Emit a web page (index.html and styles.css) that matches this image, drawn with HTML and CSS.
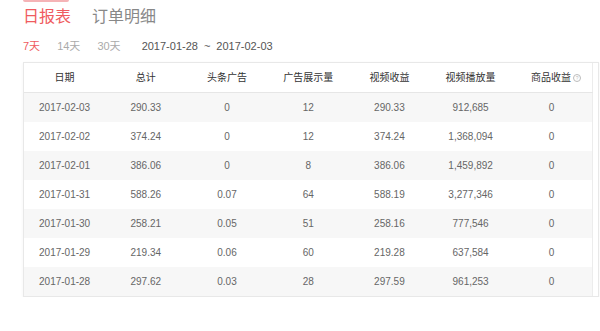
FILE: index.html
```html
<!DOCTYPE html>
<html lang="zh-CN">
<head>
    <meta charset="UTF-8">
    <meta name="viewport" content="width=device-width, initial-scale=1.0">
    <title>日报表</title>
    <link rel="stylesheet" href="styles.css">
</head>
<body>
    <div class="page">
        <div class="nav-mark"></div>

        <div class="tabs">
            <span class="tab active">日报表</span>
            <span class="tab">订单明细</span>
        </div>

        <div class="filters">
            <span class="range active">7天</span>
            <span class="range">14天</span>
            <span class="range">30天</span>
            <span class="date-range">2017-01-28<span class="tilde">~</span>2017-02-03</span>
        </div>

        <div class="table-wrap">
            <table class="report">
                <thead>
                    <tr>
                        <th>日期</th>
                        <th>总计</th>
                        <th>头条广告</th>
                        <th>广告展示量</th>
                        <th>视频收益</th>
                        <th>视频播放量</th>
                        <th>商品收益<span class="help">?</span></th>
                    </tr>
                </thead>
                <tbody>
                    <tr>
                        <td>2017-02-03</td><td>290.33</td><td>0</td><td>12</td><td>290.33</td><td>912,685</td><td>0</td>
                    </tr>
                    <tr>
                        <td>2017-02-02</td><td>374.24</td><td>0</td><td>12</td><td>374.24</td><td>1,368,094</td><td>0</td>
                    </tr>
                    <tr>
                        <td>2017-02-01</td><td>386.06</td><td>0</td><td>8</td><td>386.06</td><td>1,459,892</td><td>0</td>
                    </tr>
                    <tr>
                        <td>2017-01-31</td><td>588.26</td><td>0.07</td><td>64</td><td>588.19</td><td>3,277,346</td><td>0</td>
                    </tr>
                    <tr>
                        <td>2017-01-30</td><td>258.21</td><td>0.05</td><td>51</td><td>258.16</td><td>777,546</td><td>0</td>
                    </tr>
                    <tr>
                        <td>2017-01-29</td><td>219.34</td><td>0.06</td><td>60</td><td>219.28</td><td>637,584</td><td>0</td>
                    </tr>
                    <tr>
                        <td>2017-01-28</td><td>297.62</td><td>0.03</td><td>28</td><td>297.59</td><td>961,253</td><td>0</td>
                    </tr>
                </tbody>
            </table>
        </div>
    </div>
</body>
</html>
```

FILE: styles.css
```css
body {
    margin: 0;
    background: #fff;
    font-family: "Liberation Sans", "Noto Sans CJK SC", sans-serif;
    color: #666;
}

.page {
    padding: 0 1px 0 23px;
}

.nav-mark {
    width: 46px;
    height: 2px;
    background: #f5b3b6;
    border-radius: 0 0 2px 2px;
}

.tabs {
    display: flex;
    gap: 21px;
    margin-top: 4px;
    font-size: 16px;
    line-height: 21px;
}

.tab {
    color: #888;
}

.tab.active {
    color: #ef5b60;
}

.filters {
    display: flex;
    align-items: center;
    gap: 17px;
    margin-top: 11px;
    font-size: 11px;
    line-height: 16px;
}

.range {
    color: #aaa;
}

.range.active {
    color: #ef5b60;
}

.date-range {
    margin-left: 4px;
    color: #555;
}

.tilde {
    margin: 0 6px;
}

.table-wrap {
    margin-top: 8px;
    border: 1px solid #e8e8e8;
    padding-right: 5px;
    box-shadow: 0 1px 3px rgba(0,0,0,0.05);
}

.report {
    width: 100%;
    border-collapse: collapse;
    table-layout: fixed;
    border-right: 1px solid #ececec;
    font-size: 10px;
}

.report th,
.report td {
    padding: 0;
    height: 29px;
    line-height: 29px;
    text-align: center;
    font-weight: normal;
}

.report th {
    color: #333;
    border-bottom: 1px solid #e6e6e6;
}

.report td {
    color: #666;
}

.report tbody tr:nth-child(odd) {
    background: #f7f7f7;
}

.help {
    display: inline-block;
    width: 6px;
    height: 6px;
    margin-left: 2px;
    margin-right: -9px;
    border: 1px solid #bbb;
    border-radius: 50%;
    color: #bbb;
    font-size: 5px;
    line-height: 6px;
    vertical-align: 1px;
}
```
